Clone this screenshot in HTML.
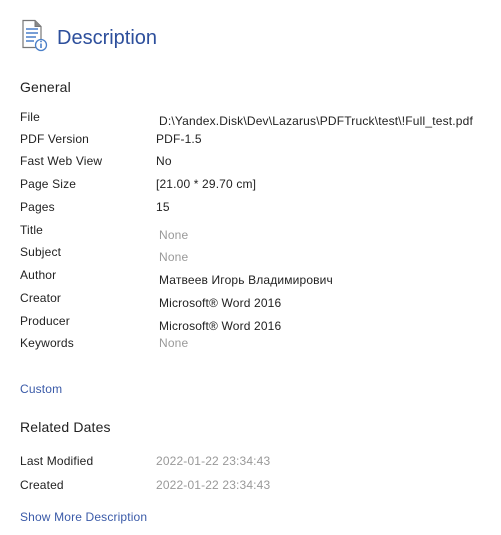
<!DOCTYPE html>
<html><head><meta charset="utf-8"><style>
body{margin:0;width:501px;height:535px;background:#fff;position:relative;font-family:"Liberation Sans",sans-serif;font-size:12px;color:#222;overflow:hidden}
div{position:absolute;white-space:nowrap;line-height:14px;letter-spacing:0.15px}
.v{left:156px}.g{color:#999}.b{color:#3a5aa8}
</style></head><body>
<svg style="position:absolute;left:20px;top:18px" width="32" height="34" viewBox="0 0 32 34">
<path d="M3 2.5H15L21 8.5V29.5H3Z" fill="#fff" stroke="#777" stroke-width="1.2"/>
<path d="M15 2.5V8.5H21" fill="#888" stroke="#777"/>
<path d="M6 11H18M6 15H18M6 19H16M6 23H14" stroke="#4a7fc8" stroke-width="1.4"/>
<circle cx="21" cy="27" r="5.5" fill="#fff" stroke="#4a7fc8" stroke-width="1.3"/>
<path d="M21 25.5V30" stroke="#4a7fc8" stroke-width="1.6"/><circle cx="21" cy="23.5" r="0.9" fill="#4a7fc8"/>
</svg>
<div style="left:57px;top:25px;font-size:20px;line-height:26px;color:#2d4f9c;letter-spacing:0">Description</div>
<div style="left:20px;top:79px;font-size:14px;line-height:16px">General</div>
<div style="left:20px;top:110px">File</div><div style="left:159px;top:114px;letter-spacing:0.18px">D:\Yandex.Disk\Dev\Lazarus\PDFTruck\test\!Full_test.pdf</div>
<div style="left:20px;top:132px">PDF Version</div><div class="v" style="top:132px">PDF-1.5</div>
<div style="left:20px;top:154px">Fast Web View</div><div class="v" style="top:154px">No</div>
<div style="left:20px;top:177px">Page Size</div><div class="v" style="top:177px">[21.00 * 29.70 cm]</div>
<div style="left:20px;top:200px">Pages</div><div class="v" style="top:200px">15</div>
<div style="left:20px;top:223px">Title</div><div class="g" style="left:159px;top:228px">None</div>
<div style="left:20px;top:245px">Subject</div><div class="g" style="left:159px;top:250px">None</div>
<div style="left:20px;top:268px">Author</div><div style="left:159px;top:273px">Матвеев Игорь Владимирович</div>
<div style="left:20px;top:291px">Creator</div><div style="left:159px;top:296px">Microsoft® Word 2016</div>
<div style="left:20px;top:314px">Producer</div><div style="left:159px;top:319px">Microsoft® Word 2016</div>
<div style="left:20px;top:336px">Keywords</div><div class="g" style="left:159px;top:336px">None</div>
<div class="b" style="left:20px;top:382px">Custom</div>
<div style="left:20px;top:419px;font-size:14px;line-height:16px">Related Dates</div>
<div style="left:20px;top:454px">Last Modified</div><div class="g v" style="top:454px">2022-01-22 23:34:43</div>
<div style="left:20px;top:478px">Created</div><div class="g v" style="top:478px">2022-01-22 23:34:43</div>
<div class="b" style="left:20px;top:510px">Show More Description</div>
</body></html>
